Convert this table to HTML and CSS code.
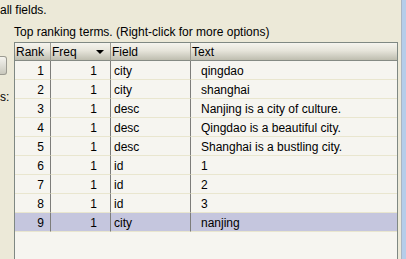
FILE: index.html
```html
<!DOCTYPE html>
<html lang="en">
<head>
  <meta charset="UTF-8" />
  <title>Top ranking terms</title>
  <link rel="stylesheet" href="styles.css">
</head>

<body>
  <div class="content">
    <div class="top">all fields.</div>

    <div class="row">
      <div class="side">
        <div class="side-btn"></div>
        <div class="side-label">s:</div>
      </div>

      <div class="main">
        <div class="caption">Top ranking terms. (Right-click for more options)</div>

        <div class="table-box">
          <table class="terms">
            <thead>
              <tr>
                <th class="c-rank">Rank</th>
                <th class="c-freq">Freq<span class="sort"></span></th>
                <th class="c-field">Field</th>
                <th class="c-text">Text</th>
              </tr>
            </thead>
            <tbody>
              <tr><td class="num">1</td><td class="num freq">1</td><td>city</td><td class="txt">qingdao</td></tr>
              <tr><td class="num">2</td><td class="num freq">1</td><td>city</td><td class="txt">shanghai</td></tr>
              <tr><td class="num">3</td><td class="num freq">1</td><td>desc</td><td class="txt">Nanjing is a city of culture.</td></tr>
              <tr><td class="num">4</td><td class="num freq">1</td><td>desc</td><td class="txt">Qingdao is a beautiful city.</td></tr>
              <tr><td class="num">5</td><td class="num freq">1</td><td>desc</td><td class="txt">Shanghai is a bustling city.</td></tr>
              <tr><td class="num">6</td><td class="num freq">1</td><td>id</td><td class="txt">1</td></tr>
              <tr><td class="num">7</td><td class="num freq">1</td><td>id</td><td class="txt">2</td></tr>
              <tr><td class="num">8</td><td class="num freq">1</td><td>id</td><td class="txt">3</td></tr>
              <tr class="selected"><td class="num">9</td><td class="num freq">1</td><td>city</td><td class="txt">nanjing</td></tr>
            </tbody>
          </table>
        </div>
      </div>
    </div>
  </div>

  <div class="edge"></div>
</body>
</html>
```

FILE: styles.css
```css
html, body {
  height: 100%;
}

body {
  margin: 0;
  display: flex;
  height: 259px;
  overflow: hidden;
  background: #ece9d8;
  font-family: 'Liberation Sans', Arial, sans-serif;
  font-size: 12px;
  line-height: 15px;
  color: #000;
}

.content {
  width: 401px;
  display: flex;
  flex-direction: column;
}

.edge {
  width: 4px;
  border-left: 1px solid #a9b4c2;
  background: #b5cdea;
}

.top {
  padding-top: 3px;
  height: 25px;
  flex: none;
  box-sizing: border-box;
}

.row {
  display: flex;
  flex: 1;
  min-height: 0;
}

.side {
  width: 14px;
  display: flex;
  flex-direction: column;
}

.side-btn {
  width: 7px;
  height: 19px;
  margin-top: 31px;
  box-sizing: border-box;
  border: 1px solid #9c9b92;
  border-left: none;
  border-radius: 0 3px 3px 0;
  background: linear-gradient(#f5f4ef, #c9c8bd);
}

.side-label {
  margin-top: 15px;
}

.main {
  width: 384px;
  display: flex;
  flex-direction: column;
}

.caption {
  height: 17px;
  flex: none;
}

.table-box {
  flex: 1;
  border: 1px solid #7f8883;
  border-bottom: none;
  background: #f6f5f0;
}

.terms {
  width: 100%;
  table-layout: fixed;
  border-collapse: separate;
  border-spacing: 0;
}

.terms th,
.terms td {
  box-sizing: border-box;
  padding: 0 0 0 1px;
  font-weight: normal;
  text-align: left;
  white-space: nowrap;
  overflow: hidden;
}

.terms th {
  height: 18px;
  padding-top: 2px;
  vertical-align: top;
  border-right: 1px solid #9d9c92;
  border-bottom: 1px solid #868b85;
  background: linear-gradient(#f5f4ee, #e6e4da 45%, #bebdaf);
}

.terms th.c-text {
  border-right: none;
}

.c-rank { width: 36px; }
.c-freq { width: 60px; position: relative; }
.c-field { width: 80px; }

.sort {
  position: absolute;
  right: 6px;
  top: 7px;
  width: 0;
  height: 0;
  border-left: 4px solid transparent;
  border-right: 4px solid transparent;
  border-top: 4px solid #000;
}

.terms td {
  height: 19px;
  padding-top: 3px;
  padding-left: 3px;
  vertical-align: top;
  border-right: 1px solid #7d7d7a;
  border-bottom: 1px solid #e9e6cf;
}

.terms td:last-child {
  border-right: none;
}

.terms td.num {
  text-align: right;
  padding-right: 6px;
}

.terms td.freq {
  padding-right: 13px;
}

.terms td.txt {
  padding-left: 10px;
}

.terms tr.selected td {
  background: #c5c6de;
}
```
